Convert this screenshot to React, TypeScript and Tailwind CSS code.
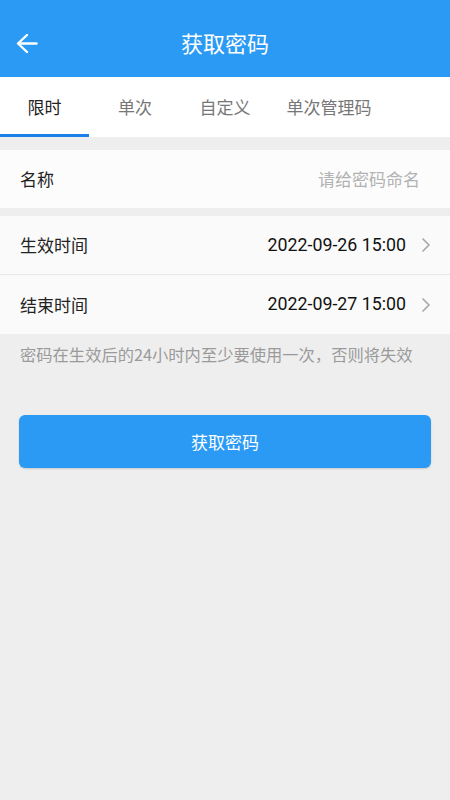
import { ChevronRight } from "lucide-react";

const FONT = { fontFamily: '"Noto Sans CJK SC", "Noto Sans", Roboto, sans-serif' };

const tabs = [
  { label: "限时", w: "w-[89px]", active: true },
  { label: "单次", w: "w-[92px]" },
  { label: "自定义", w: "w-[88px]" },
  { label: "单次管理码", w: "w-[120px]" },
];

function TimeRow({ label, value, border }: { label: string; value: string; border?: boolean }) {
  return (
    <div
      className={`flex h-[59px] items-center bg-[#fafafa] pl-[20px] pr-[12px] ${border ? "border-b border-[#e8e8e8]" : ""}`}
    >
      <span className="text-[17px] text-[#222]">{label}</span>
      <span className="ml-auto text-[17.8px] text-[#111]" style={{ fontFamily: 'Roboto, "Noto Sans CJK SC", sans-serif' }}>
        {value}
      </span>
      <ChevronRight className="ml-[8px] h-[24px] w-[24px] text-[#a8a8a8]" strokeWidth={1.7} />
    </div>
  );
}

export default function App() {
  return (
    <div className="flex h-[800px] w-[450px] flex-col bg-[#eeeeee]" style={FONT}>
      {/* toolbar */}
      <header className="relative flex h-[77px] items-center justify-center bg-[#2a9af5] pt-[8px]">
        <svg
          className="absolute left-[16px] top-[33px]"
          width="22"
          height="21"
          viewBox="0 0 22 21"
          fill="none"
          stroke="white"
          strokeWidth="2.4"
          strokeLinecap="round"
          strokeLinejoin="round"
        >
          <path d="M2 10.5h18.5M11 2l-9 8.5 9 8.5" />
        </svg>
        <h1 className="text-[22px] font-normal text-white">获取密码</h1>
      </header>

      {/* tabs */}
      <nav className="flex h-[60px] bg-white">
        {tabs.map((t) => (
          <div key={t.label} className={`relative flex items-center justify-center ${t.w}`}>
            <span className={`text-[17px] ${t.active ? "text-[#222]" : "text-[#777]"}`}>{t.label}</span>
            {t.active ? <div className="absolute bottom-0 left-0 h-[3px] w-full bg-[#1a7fe8]" /> : null}
          </div>
        ))}
      </nav>

      <div className="mt-[13px] flex h-[58px] items-center bg-[#fcfcfc] px-[20px]">
        <span className="text-[17px] text-[#222]">名称</span>
        <span className="ml-auto pr-[10px] text-[17px] text-[#b2b2b2]">请给密码命名</span>
      </div>

      <div className="mt-[8px]">
        <TimeRow label="生效时间" value="2022-09-26 15:00" border />
        <TimeRow label="结束时间" value="2022-09-27 15:00" />
      </div>

      <p className="px-[20px] pt-[8px] text-[16.3px] text-[#9a9a9a]">
        密码在生效后的24小时内至少要使用一次，否则将失效
      </p>

      <button className="mx-[19px] mt-[49px] flex h-[53px] items-center justify-center rounded-[6px] bg-[#2a9af5] text-[17px] text-white shadow-[0_1px_2px_rgba(0,0,0,0.15)]">
        获取密码
      </button>
    </div>
  );
}
